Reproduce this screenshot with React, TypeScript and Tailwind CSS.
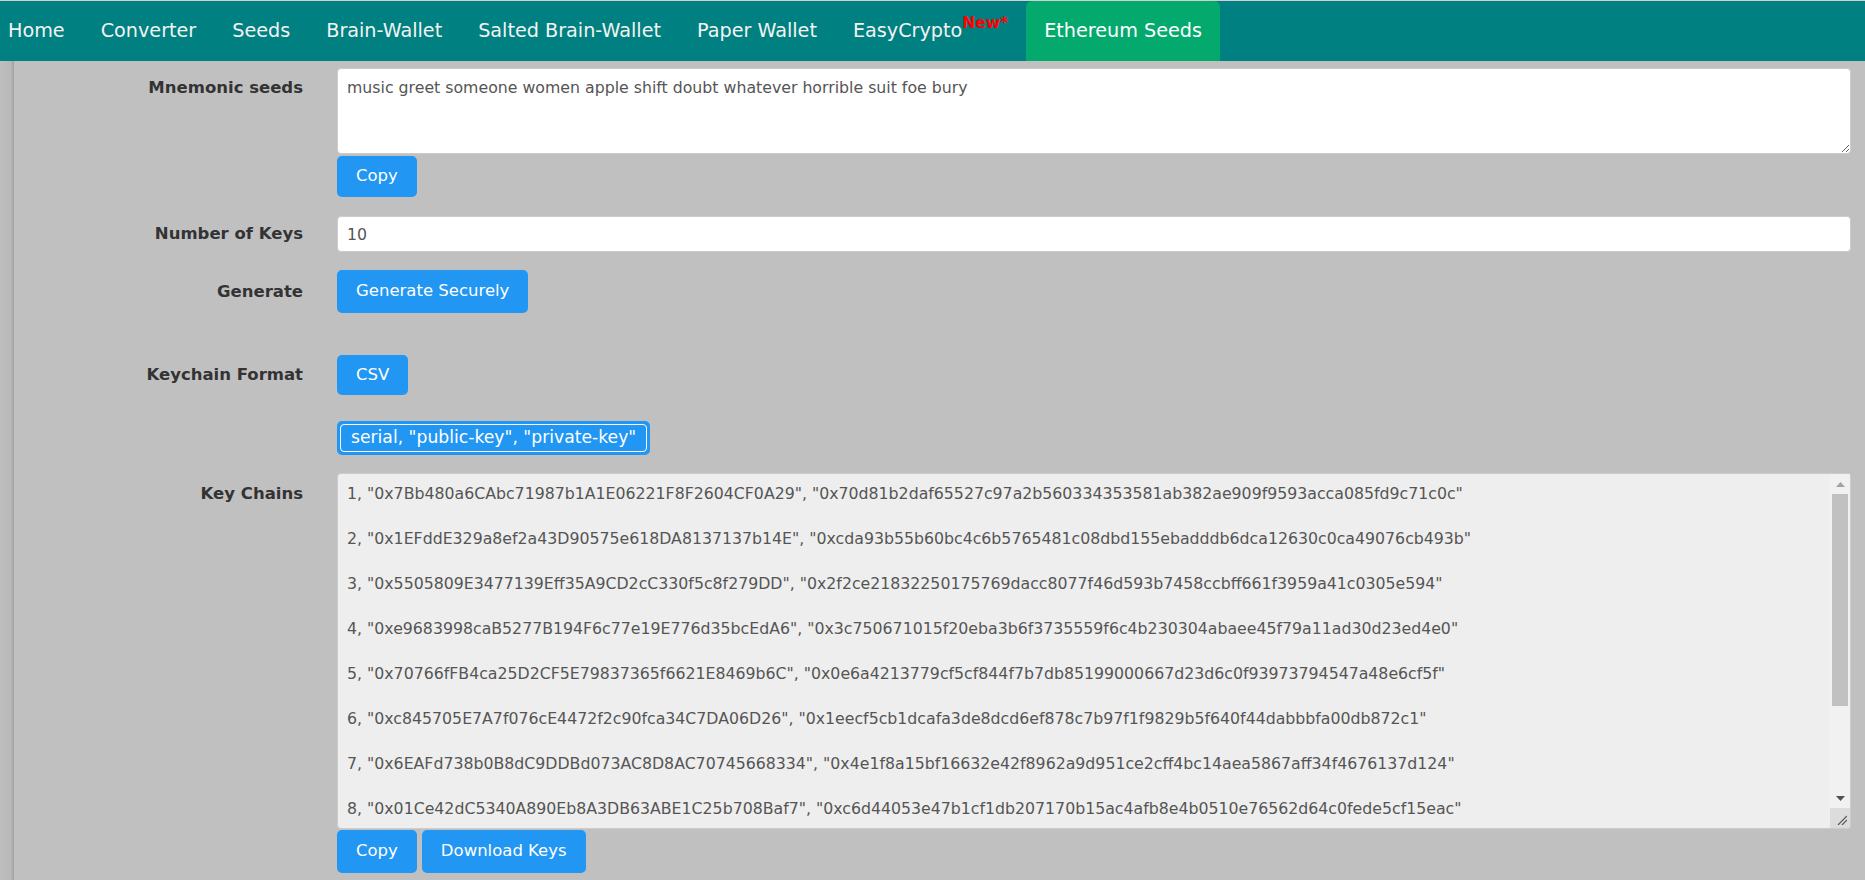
import React from 'react';

const navItems = ['Home', 'Converter', 'Seeds', 'Brain-Wallet', 'Salted Brain-Wallet', 'Paper Wallet'];

const keys = [
  ['0x7Bb480a6CAbc71987b1A1E06221F8F2604CF0A29', '0x70d81b2daf65527c97a2b560334353581ab382ae909f9593acca085fd9c71c0c'],
  ['0x1EFddE329a8ef2a43D90575e618DA8137137b14E', '0xcda93b55b60bc4c6b5765481c08dbd155ebadddb6dca12630c0ca49076cb493b'],
  ['0x5505809E3477139Eff35A9CD2cC330f5c8f279DD', '0x2f2ce21832250175769dacc8077f46d593b7458ccbff661f3959a41c0305e594'],
  ['0xe9683998caB5277B194F6c77e19E776d35bcEdA6', '0x3c750671015f20eba3b6f3735559f6c4b230304abaee45f79a11ad30d23ed4e0'],
  ['0x70766fFB4ca25D2CF5E79837365f6621E8469b6C', '0x0e6a4213779cf5cf844f7b7db85199000667d23d6c0f93973794547a48e6cf5f'],
  ['0xc845705E7A7f076cE4472f2c90fca34C7DA06D26', '0x1eecf5cb1dcafa3de8dcd6ef878c7b97f1f9829b5f640f44dabbbfa00db872c1'],
  ['0x6EAFd738b0B8dC9DDBd073AC8D8AC70745668334', '0x4e1f8a15bf16632e42f8962a9d951ce2cff4bc14aea5867aff34f4676137d124'],
  ['0x01Ce42dC5340A890Eb8A3DB63ABE1C25b708Baf7', '0xc6d44053e47b1cf1db207170b15ac4afb8e4b0510e76562d64c0fede5cf15eac'],
  ['0x9a3F0c21B7e54D8a1fC06b2E3d9A47c5E8b1F0a2', '0x5b8e2d71c04f9a36e1b7d25c8f03a94e6d1b7c2f58a03e9d41c6b72f0e8a5d93'],
  ['0x3D7c9E1a5B02f84C6e3A9d07B51F2c8E4a6D90b3', '0xa17c4e09d3b86f25e0c9a4d71b38f6e2c05d9a8b74e1f36c02d8b59a6e4f7c10'],
];

const keyText = keys.map(([pub, priv], i) => `${i + 1}, "${pub}", "${priv}"`).join('\n\n');

const btn =
  'bg-[#2196F3] text-white text-[16.5px] leading-none px-[19px] rounded-[5px] flex items-center';

const Label = ({ children, className = '' }: { children?: React.ReactNode; className?: string }) => (
  <div className={`w-[289px] shrink-0 text-right font-bold text-[16.5px] leading-[24px] text-[#333] ${className}`}>
    {children}
  </div>
);

// fake classic scrollbar, the headless browser hides the native one
const ScrollBar = () => (
  <div className="absolute top-[1px] right-[1px] bottom-[1px] w-[20px] flex flex-col bg-[#f1f1f1]">
    <div className="h-[20px] flex items-center justify-center">
      <svg width="9" height="5" viewBox="0 0 9 5">
        <path d="M0 5 L4.5 0 L9 5 Z" fill="#a3a3a3" />
      </svg>
    </div>
    <div className="h-[212px] mx-[2px] bg-[#c1c1c1]" />
    <div className="flex-1" />
    <div className="h-[20px] flex items-center justify-center">
      <svg width="9" height="5" viewBox="0 0 9 5">
        <path d="M0 0 L9 0 L4.5 5 Z" fill="#505050" />
      </svg>
    </div>
    <div className="h-[20px] bg-[#dcdcdc] flex items-end justify-end p-[3px]">
      <svg width="10" height="10" viewBox="0 0 10 10">
        <path d="M1 10 L10 1 M5 10 L10 5" stroke="#555" strokeWidth="1.2" />
      </svg>
    </div>
  </div>
);

export default function App() {
  return (
    <div className="min-h-screen bg-[#c0c0c0] font-['DejaVu_Sans',Verdana,sans-serif]">
      <nav className="flex h-[61px] bg-[#008080] border-t border-[#cfcfcf] text-[19.2px] text-[#f3f3f3]">
        {navItems.map((item, i) => (
          <a key={item} className={`flex items-center pr-[18px] ${i === 0 ? 'pl-[8px]' : 'pl-[18px]'}`}>
            {item}
          </a>
        ))}
        <a className="flex items-center px-[18px]">
          EasyCrypto
          <span className="relative -top-[7px] text-[15.5px] font-bold text-[#ff0000]">New*</span>
        </a>
        <a className="flex items-center px-[18px] bg-[#04AA6D] rounded-t-[6px] text-white">Ethereum Seeds</a>
      </nav>

      <div className="flex">
        <div className="w-[14px] shrink-0 self-stretch bg-linear-to-r from-[#bebebe] via-[#b9b9b9] via-75% to-[#a2a2a2]" />
        <main className="flex-1 pr-[14px] pt-[7px] pb-[8px]">
          {/* mnemonic */}
          <div className="flex gap-[34px]">
            <Label className="pt-[8px]">Mnemonic seeds</Label>
            <div className="flex-1 flex flex-col items-start">
              <textarea
                defaultValue="music greet someone women apple shift doubt whatever horrible suit foe bury"
                className="w-full h-[86px] bg-white border border-[#ccc] rounded-[4px] px-[9px] py-[8px] text-[15.75px] leading-[22.5px] text-[#555] outline-none"
              />
              <button className={`${btn} h-[41px] mt-[2px]`}>Copy</button>
            </div>
          </div>

          {/* number of keys */}
          <div className="flex gap-[34px] items-center mt-[19px]">
            <Label>Number of Keys</Label>
            <input
              defaultValue="10"
              className="flex-1 h-[36px] bg-white border border-[#ccc] rounded-[4px] px-[9px] text-[15.75px] text-[#555] outline-none"
            />
          </div>

          {/* generate */}
          <div className="flex gap-[34px] items-center mt-[18px]">
            <Label>Generate</Label>
            <button className={`${btn} h-[43px]`}>Generate Securely</button>
          </div>

          {/* format */}
          <div className="flex gap-[34px] items-center mt-[42px]">
            <Label>Keychain Format</Label>
            <button className={`${btn} h-[40px]`}>CSV</button>
          </div>

          <div className="flex gap-[34px] mt-[26px]">
            <Label />
            <div className="bg-[#2196F3] rounded-[5px] p-[3px] h-[34px]">
              <div className="h-full border border-white rounded-[4px] px-[10px] flex items-center text-white text-[17.2px]">
                serial, "public-key", "private-key"
              </div>
            </div>
          </div>

          {/* key chains */}
          <div className="flex gap-[34px] mt-[18px]">
            <Label className="pt-[9px]">Key Chains</Label>
            <div className="flex-1 flex flex-col items-start">
              <div className="relative w-full">
                <textarea
                  readOnly
                  value={keyText}
                  className="block w-full h-[356px] bg-[#eee] border border-[#ccc] rounded-[4px] pl-[9px] pr-[24px] py-[9px] text-[15.75px] leading-[22.5px] text-[#555] outline-none whitespace-pre overflow-hidden resize-none"
                />
                <ScrollBar />
              </div>
              <div className="flex gap-[5px] mt-[1px]">
                <button className={`${btn} h-[43px]`}>Copy</button>
                <button className={`${btn} h-[43px]`}>Download Keys</button>
              </div>
            </div>
          </div>
        </main>
      </div>
    </div>
  );
}
